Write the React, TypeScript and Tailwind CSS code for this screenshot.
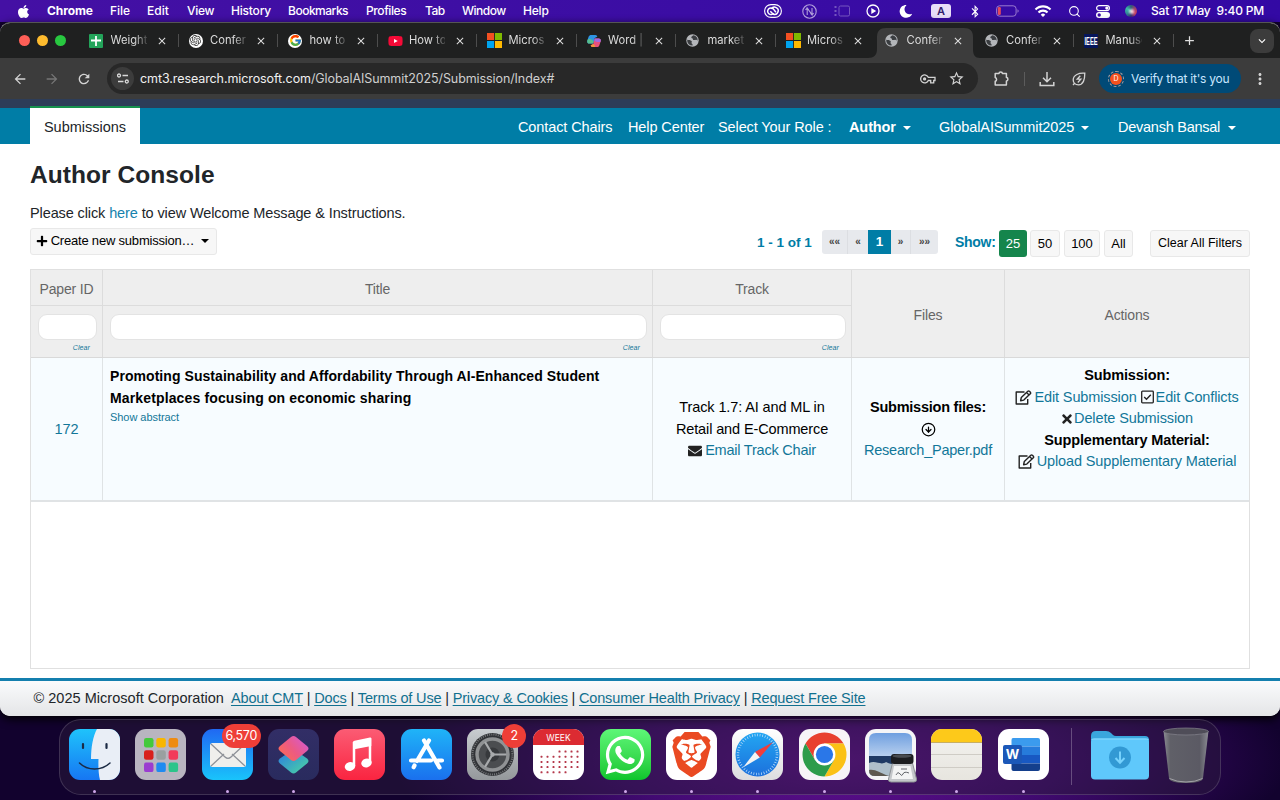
import React from "react";
import { FaApple, FaBluetoothB, FaMoon, FaYoutube, FaTimes, FaEnvelope, FaPlus, FaWhatsapp } from "react-icons/fa";
import { FcGoogle } from "react-icons/fc";
import { SiBrave, SiOpenai } from "react-icons/si";
import { MdWifi, MdStarOutline, MdArrowBack, MdArrowForward, MdRefresh, MdMoreVert, MdClose, MdAdd, MdExpandMore } from "react-icons/md";
import { LuSearch, LuCircleArrowDown } from "react-icons/lu";

const menus: [string, string][] = [
  ["Chrome", "w-[63px] font-bold tracking-[-0.100px]"],
  ["File", "w-[37px]"],
  ["Edit", "w-[40px]"],
  ["View", "w-[44px] tracking-[-0.300px]"],
  ["History", "w-[57px] tracking-[-0.200px]"],
  ["Bookmarks", "w-[78px] tracking-[-0.500px]"],
  ["Profiles", "w-[59px] tracking-[-0.400px]"],
  ["Tab", "w-[37px] tracking-[-0.500px]"],
  ["Window", "w-[61px] tracking-[-0.500px]"],
  ["Help", "w-[40px] tracking-[-0.200px]"],
];

function MenuBar() {
  return (
    <div className="flex h-[22px] items-center bg-gradient-to-r from-[#4410a4] to-[#3309a4] font-['Inter'] text-[12px] font-medium text-white">
      <FaApple className="ml-[17px] mr-[17px] h-[15px] w-[13px] shrink-0" />
      {menus.map(([m, c]) => (
        <span key={m} className={`shrink-0 whitespace-nowrap ${c}`}>{m}</span>
      ))}
      <div className="ml-auto mr-[16px] flex shrink-0 items-center">
        <svg className="h-[14px] w-[18px]" viewBox="0 0 18 14" fill="none" stroke="white">
          <rect x="0.600" y="0.600" width="16.800" height="12.800" rx="6.400" strokeWidth="1.100" />
          <path d="M9.600 9.200a3.300 3.300 0 1 1-.300-4.300l2.600 3.300" strokeWidth="1.500" />
          <path d="M6.300 7.200 9 10a3.600 3.600 0 1 0-1.600-5" strokeWidth="1.500" />
        </svg>
        <svg className="ml-[20px] h-[15px] w-[15px] opacity-60" viewBox="0 0 15 15" fill="none" stroke="white" strokeWidth="1.100">
          <circle cx="7.500" cy="7.500" r="6.700" />
          <path d="M5.200 11V4.200l4.800 6.500V4M3.500 5.800l1.700-1.800 1.500 1.800M8.400 9.200l1.600 1.800 1.600-1.800" />
        </svg>
        <svg className="ml-[17px] h-[12px] w-[16px] opacity-30" viewBox="0 0 16 12" fill="none" stroke="white">
          <rect x="5" y="1" width="10.500" height="10" rx="1.500" />
          <path d="M1.500 1v10" strokeWidth="2" strokeDasharray="2 2" />
        </svg>
        <svg className="ml-[16px] h-[14px] w-[14px]" viewBox="0 0 14 14" fill="none" stroke="white" strokeWidth="1.300">
          <circle cx="7" cy="7" r="6" />
          <path d="M5.300 4.100v5.800L10.200 7z" fill="white" stroke="none" />
        </svg>
        <FaMoon className="ml-[19px] h-[13px] w-[13px] -rotate-12" />
        <span className="ml-[19px] flex h-[14px] w-[20px] items-center justify-center rounded-[3px] bg-[#e8def8] text-[11px] font-semibold text-[#33206b]">A</span>
        <FaBluetoothB className="ml-[19px] h-[13px] w-[10px]" />
        <svg className="ml-[16px] h-[12px] w-[23px]" viewBox="0 0 23 12" fill="none">
          <rect x="0.600" y="0.800" width="19.500" height="10.400" rx="3" stroke="#9b7bd0" />
          <path d="M21.500 4.200v3.600a2 2 0 0 0 0-3.600z" fill="#9b7bd0" />
          <rect x="1.800" y="2" width="3" height="8" rx="1.200" fill="#e44a5c" />
        </svg>
        <MdWifi className="ml-[15px] h-[18px] w-[18px]" />
        <LuSearch className="ml-[16px] h-[13px] w-[13px]" />
        <svg className="ml-[15px] h-[13px] w-[14px]" viewBox="0 0 14 13">
          <rect x="0.600" y="0.600" width="12.800" height="5" rx="2.500" fill="none" stroke="white" strokeWidth="1.200" />
          <circle cx="10.800" cy="3.100" r="1.600" fill="white" />
          <rect x="0" y="7" width="14" height="6" rx="3" fill="white" />
          <circle cx="3.200" cy="10" r="1.700" fill="#3a0ba4" />
        </svg>
        <span className="ml-[15px] flex h-[12px] w-[12px] items-center justify-center rounded-full bg-[conic-gradient(#2b6078,#a03c6c,#c83c60,#303070,#2f8a98,#3bb8a8,#2b6078)]">
          <span className="h-[5px] w-[5px] rounded-full bg-white/80 blur-[1px]" />
        </span>
        <span className="ml-[14px] w-[113px] whitespace-pre tracking-[-0.180px]">Sat 17 May  9:40 PM</span>
      </div>
    </div>
  );
}

const MsLogo = () => (
  <svg className="h-[15px] w-[15px]" viewBox="0 0 14 14">
    <path d="M0 0h6.600v6.600H0z" fill="#f25022" />
    <path d="M7.400 0H14v6.600H7.400z" fill="#7fba00" />
    <path d="M0 7.400h6.600V14H0z" fill="#00a4ef" />
    <path d="M7.400 7.400H14V14H7.400z" fill="#ffb900" />
  </svg>
);
const Globe = () => (
  <svg className="h-[13px] w-[13px]" viewBox="0 0 13 13">
    <circle cx="6.500" cy="6.500" r="6.200" fill="#b4b6ba" />
    <path d="M7 1.300c-.3 1.200-1.700 1-1.700 2.200 0 1 1.600.6 1.600 1.700 0 1 1.600 1 2.600.7 1-.3 1.600.3 2.200.800A5.300 5.300 0 0 0 7 1.300z" fill="#3a3d40" />
    <path d="M1.200 5.800c1.300.3 3.600.2 4.400 1.200.7.900-.5 1.500 0 2.300.4.700 1.300.8 1 2.300A5.200 5.200 0 0 1 1.200 5.800z" fill="#3a3d40" />
  </svg>
);

const tabs: { icon: React.ReactNode; label: string; active?: boolean; noSep?: boolean }[] = [
  {
    icon: (
      <svg className="h-[14px] w-[14px]" viewBox="0 0 14 14">
        <rect width="14" height="14" rx="1" fill="#23a45a" />
        <path d="M7 2v10M2 6.500h10" stroke="white" strokeWidth="1.800" />
      </svg>
    ),
    label: "Weight",
  },
  {
    icon: (
      <span className="flex h-[14px] w-[14px] items-center justify-center rounded-full bg-white">
        <SiOpenai className="h-[11px] w-[11px] text-[#333]" />
      </span>
    ),
    label: "Confer",
  },
  {
    icon: (
      <span className="flex h-[14px] w-[14px] items-center justify-center rounded-full bg-white">
        <FcGoogle className="h-[13px] w-[13px]" />
      </span>
    ),
    label: "how to",
  },
  { icon: <FaYoutube className="h-[16px] w-[15px] bg-[linear-gradient(white,white)] bg-[length:6px_6px] bg-center bg-no-repeat text-[#f50a37]" />, label: "How to" },
  { icon: <MsLogo />, label: "Micros" },
  {
    icon: (
      <svg className="h-[14px] w-[14px]" viewBox="0 0 14 14">
        <path d="M4.200 1h4.200c1.200 0 1.600.8 1.900 1.800L7.700 4 6.300 9.600H2.200C.4 9.600-.1 8 .4 6.200L1.700 2.600C2.100 1.600 3 1 4.200 1z" fill="#2e94e4" />
        <path d="M.4 6.200C1.500 4 5 5 6.800 7.500l-.5 2.100H2.200C.4 9.600-.1 8 .4 6.200z" fill="#58bf8c" />
        <path d="M9.800 13H5.600c-1.200 0-1.600-.8-1.900-1.800L6.300 10l1.400-5.600h4.100c1.800 0 2.300 1.600 1.800 3.400l-1.300 3.600c-.4 1-1.300 1.600-2.500 1.600z" fill="#e8507c" />
        <path d="M7.700 4.400h4.100c1.800 0 2.300 1.600 1.800 3.400C12 8.500 8.500 8 7.200 6.400z" fill="#a06ae0" />
        <path d="M3.700 11.200 6.300 10l1.400 1 .5 2H5.600c-1.200 0-1.600-.8-1.900-1.800z" fill="#f0963c" />
      </svg>
    ),
    label: "Word |",
  },
  { icon: <Globe />, label: "market" },
  { icon: <MsLogo />, label: "Micros", noSep: true },
  { icon: <Globe />, label: "Confer", active: true, noSep: true },
  { icon: <Globe />, label: "Confer" },
  {
    icon: (
      <svg className="h-[14px] w-[14px]" viewBox="0 0 14 14">
        <rect width="14" height="14" fill="#06165c" />
        <text x="7" y="10.800" textAnchor="middle" textLength="13" lengthAdjust="spacingAndGlyphs" fontSize="10" fontWeight="700" fill="white" fontFamily="Liberation Sans, sans-serif">IEEE</text>
      </svg>
    ),
    label: "Manusc",
  },
];

function TabStrip() {
  return (
    <div className="flex h-[35px] items-center bg-[#1f2020]">
      <div className="flex w-[79px] shrink-0 gap-[7px] pl-[18.500px]">
        <span className="h-[11px] w-[11px] rounded-full bg-[#fe5f57]" />
        <span className="h-[11px] w-[11px] rounded-full bg-[#febb2e]" />
        <span className="h-[11px] w-[11px] rounded-full bg-[#28c840]" />
      </div>
      {tabs.map((t, i) => (
        <div key={i} className="relative flex h-full w-[99.500px] shrink-0 items-center pl-[10px]">
          {t.active && (
            <svg className="absolute bottom-0 left-[-7px] h-[30px] w-[112px]" viewBox="0 0 112 30">
              <path d="M0 30c6 0 9-3 9-9V9c0-6 3-9 9-9h78c6 0 9 3 9 9v12c0 6 2 9 7 9z" fill="#3c3c3c" />
            </svg>
          )}
          <span className="relative flex w-[21.500px] shrink-0">{t.icon}</span>
          <span className="relative w-[36px] shrink-0 whitespace-nowrap font-['Inter'] text-[11.200px] text-[#dcdcdc] [mask-image:linear-gradient(90deg,black_65%,#0003)]">{t.label}</span>
          <MdClose className="relative ml-[9px] h-[12px] w-[12px] shrink-0 text-[#e0e0e0]" />
          {!t.noSep && <span className="ml-auto h-[13px] w-px bg-[#4d4d4d]" />}
        </div>
      ))}
      <MdAdd className="ml-[8px] h-[15px] w-[15px] text-[#e0e0e0]" />
      <span className="ml-auto mr-[6px] flex h-[24px] w-[24px] items-center justify-center rounded-[8px] bg-[#3c3c3c]">
        <MdExpandMore className="h-[14px] w-[14px] text-white" />
      </span>
    </div>
  );
}

function Toolbar() {
  return (
    <div className="flex h-[41px] items-center bg-[#3c3c3c] text-[#d3d3d3]">
      <MdArrowBack className="ml-[12px] h-[16px] w-[16px]" />
      <MdArrowForward className="ml-[16px] h-[16px] w-[16px] text-[#767676]" />
      <MdRefresh className="ml-[16px] h-[16px] w-[16px]" />
      <div className="ml-[15px] flex h-[31px] w-[871px] items-center rounded-full bg-[#282828] pl-[4px]">
        <span className="flex h-[23px] w-[23px] items-center justify-center rounded-full bg-[#3c3c3c]">
          <svg className="h-[11px] w-[12px]" viewBox="0 0 12 11" fill="none" stroke="#d8d8d8" strokeWidth="1.300">
            <circle cx="2" cy="2.500" r="1.500" />
            <path d="M5.500 2.500H11M1 8.500h5.500" />
            <circle cx="9.800" cy="8.500" r="1.500" />
          </svg>
        </span>
        <span className="ml-[6px] whitespace-nowrap pt-px font-['Inter'] text-[12.500px] tracking-[-0.090px] text-[#cfcfcf]">
          <span className="text-[#f0f0f0]">cmt3.research.microsoft.com</span>/GlobalAISummit2025/Submission/Index#
        </span>
        <svg className="ml-auto h-[10px] w-[16px]" viewBox="0 0 16 10" fill="none" stroke="currentColor" strokeWidth="1.300">
          <path d="M8.300 3.300H15v3.200h-1.300v2.300h-3V6.500H8.300A4 4 0 1 1 8.300 3.300z" />
          <circle cx="4.600" cy="4.900" r="1" fill="currentColor" />
        </svg>
        <MdStarOutline className="ml-[12px] mr-[13px] h-[17px] w-[17px]" />
      </div>
      <svg className="ml-[16px] h-[16px] w-[15px]" viewBox="0 0 15 16" fill="none" stroke="currentColor" strokeWidth="1.500" strokeLinejoin="round">
        <path d="M1.200 2.600H5a1.700 1.500 0 0 1 3.400 0h4v4a1.500 1.700 0 0 1 0 3.400v4H1.200v-3.700a2 2 0 0 0 0-3.800z" />
      </svg>
      <span className="ml-[15px] h-[14px] w-px bg-[#5c5c5c]" />
      <svg className="ml-[14px] h-[16px] w-[16px]" viewBox="0 0 16 16" fill="none" stroke="currentColor" strokeWidth="1.500">
        <path d="M8 1v9.500M4 6.700l4 4 4-4M1.200 11v3.500h13.600V11" />
      </svg>
      <svg className="ml-[17px] h-[14px] w-[14px]" viewBox="0 0 14 14" fill="none" stroke="currentColor" strokeWidth="1.300">
        <path d="M12.800 1.200C7 .6 1.200 3 1.200 8c0 3 2.300 4.800 5.200 4.800 5 0 6.400-4.800 6.400-11.600zM2.600 11.300 1 13" />
        <path d="M8.300 3.800 5.200 7.200h3.600L5.800 10.500" />
      </svg>
      <span className="ml-[13px] flex h-[29px] w-[142px] items-center rounded-full bg-[#004a77] pl-[9px]">
        <span className="flex h-[16px] w-[16px] shrink-0 items-center justify-center rounded-full border border-dashed border-[#b0a0a0]">
          <span className="flex h-[12px] w-[12px] shrink-0 items-center justify-center rounded-full bg-[#f4511e] font-['Inter'] text-[7px] leading-none text-white">D</span>
        </span>
        <span className="ml-[7px] whitespace-nowrap font-['Inter'] text-[12px] tracking-[-0.220px] text-[#c8e6ff]">Verify that it's you</span>
      </span>
      <MdMoreVert className="ml-[10px] h-[18px] w-[18px]" />
    </div>
  );
}

const Caret = ({ dark = false }: { dark?: boolean }) => (
  <svg className="h-[4px] w-[8px] shrink-0" viewBox="0 0 8 4">
    <path d="M0 0h8L4 4z" fill={dark ? "#000" : "#fff"} />
  </svg>
);

function SiteNav() {
  return (
    <>
      <div className="h-[9px] bg-[#2d3d58]" />
      <div className="flex h-[36px] items-center bg-[#007da6] text-[14.500px] text-white">
        <div className="-mt-[2px] ml-[30px] flex h-[38px] w-[110px] shrink-0 items-center justify-center border-t-2 border-[#16924d] bg-white pt-[4px] text-[#212529]">Submissions</div>
        <div className="flex flex-1 items-center whitespace-nowrap pl-[378px] pt-[3px] tracking-[-0.100px]">
          <span className="w-[110px]">Contact Chairs</span>
          <span className="w-[90px]">Help Center</span>
          <span className="w-[131px]">Select Your Role :</span>
          <span className="w-[54px] font-bold">Author</span>
          <Caret />
          <span className="ml-[28px] w-[142px]">GlobalAISummit2025</span>
          <Caret />
          <span className="ml-[29px] w-[110px] tracking-[-0.250px]">Devansh Bansal</span>
          <Caret />
        </div>
      </div>
    </>
  );
}

const link = "text-[#127799]";
const btn = "flex h-[27px] items-center justify-center whitespace-nowrap rounded-[3px] border border-[#e8e8e8] bg-[#f7f7f7] text-black";

function Controls() {
  return (
    <div className="mt-[5px] flex h-[31px] items-start text-[13px]">
      <button className={`${btn} w-[187px] gap-[3px] pb-px pr-[2px]`}>
        <FaPlus className="h-[12px] w-[12px]" />
        <span className="mr-[4px] tracking-[-0.200px]">Create new submission…</span>
        <Caret dark />
      </button>
      <span className="ml-[540px] mt-[5px] w-[65px] whitespace-nowrap text-[13.500px] font-bold leading-[19px] text-[#007da6]">1 - 1 of 1</span>
      <div className="mt-[2px] flex h-[24px] overflow-hidden rounded-[3px] bg-[#e7e9ed] text-[10px] font-bold leading-[24px] text-[#444]">
        <span className="w-[26px] border-r border-[#dcdee2] text-center">««</span>
        <span className="w-[20px] text-center">«</span>
        <span className="w-[23px] bg-[#007da6] text-center text-[13.500px] text-white">1</span>
        <span className="w-[20px] border-r border-[#dcdee2] text-center">»</span>
        <span className="w-[27px] text-center">»»</span>
      </div>
      <span className="ml-[17px] mt-[5px] w-[44px] whitespace-nowrap text-[14px] font-bold leading-[19px] tracking-[-0.300px] text-[#007da6]">Show:</span>
      <div className="mt-[2px] flex gap-[3px]">
        <span className="flex h-[27px] w-[28px] items-center justify-center rounded-[3px] bg-[#15854c] text-white">25</span>
        <span className={`${btn} w-[30px]`}>50</span>
        <span className={`${btn} ml-[1px] w-[36px]`}>100</span>
        <span className={`${btn} ml-[1px] w-[29px]`}>All</span>
        <span className={`${btn} ml-[14px] w-[100px] text-[12.500px]`}>Clear All Filters</span>
      </div>
    </div>
  );
}

function FilterHead({ label }: { label: string }) {
  return (
    <div className="border-r border-[#dcdcdc]">
      <div className="flex h-[36px] items-center justify-center border-b border-[#dcdcdc] pt-[3px]">{label}</div>
      <div className="pl-[7px] pr-[5px] pt-[8px]">
        <div className="h-[26px] rounded-[9px] border border-[#e3e3e3] bg-white" />
        <div className="mt-[3px] pr-[7px] text-right text-[7px] italic leading-[9px] tracking-[0.100px] text-[#127799]">Clear</div>
      </div>
    </div>
  );
}

const EditIcon = () => (
  <svg className="h-[15px] w-[17px]" viewBox="0 0 17 15" fill="none" stroke="#222" strokeWidth="1.400" strokeLinejoin="round">
    <path d="M9.500 2H1.200v12h11.500V9" />
    <path d="m5.600 10.700.7-3.200 6.500-6.300q.8-.6 1.600.1l1 1q.6.800-.1 1.500L8.800 10.100zM11.500 2.500l2.600 2.500" />
  </svg>
);
const CheckIcon = () => (
  <svg className="h-[14px] w-[13px]" viewBox="0 0 13 14" fill="none" stroke="#222">
    <rect x=".7" y="1.200" width="11.600" height="11.600" rx=".8" strokeWidth="1.300" />
    <path d="m3.200 7 2.300 2.300 4.300-4.600" strokeWidth="1.400" />
  </svg>
);

const cols = "grid grid-cols-[72px_550px_199px_153px_244px]";

function SubmissionTable() {
  return (
    <div className="mt-[10px] h-[400px] border border-[#e0e0e0] text-[14.500px]">
      <div className={`${cols} h-[88px] border-b border-[#d9d9d9] bg-[#eeeeee] text-[14px] tracking-[-0.150px] text-[#666]`}>
        <FilterHead label="Paper ID" />
        <FilterHead label="Title" />
        <FilterHead label="Track" />
        <div className="flex items-center justify-center border-r border-[#dcdcdc] pt-[3px]">Files</div>
        <div className="flex items-center justify-center pt-[3px]">Actions</div>
      </div>
      <div className={`${cols} h-[144px] border-b-2 border-[#e0e3e5] bg-[#f7fcff] leading-[21.500px] tracking-[-0.120px] text-black`}>
        <div className={`flex items-center justify-center border-r border-[#dfe3e5] pt-[2px] ${link}`}>172</div>
        <div className="border-r border-[#dfe3e5] pl-[7px] pt-[8px] text-[14px]">
          <div className="whitespace-nowrap font-bold tracking-[0.060px]">Promoting Sustainability and Affordability Through AI-Enhanced Student<br /><span className="tracking-[0.140px]">Marketplaces focusing on economic sharing</span></div>
          <div className={`text-[11px] leading-[16px] tracking-[-0.050px] ${link}`}>Show abstract</div>
        </div>
        <div className="flex flex-col items-center justify-center whitespace-nowrap border-r border-[#dfe3e5] pt-[1px]">
          <span>Track 1.7: AI and ML in</span>
          <span>Retail and E-Commerce</span>
          <span className={`flex items-center gap-[3px] tracking-[-0.220px] ${link}`}><FaEnvelope className="h-[14px] w-[14px] text-[#222]" />Email Track Chair</span>
        </div>
        <div className="flex flex-col items-center justify-center whitespace-nowrap border-r border-[#dfe3e5] pt-[1px] tracking-[-0.240px]">
          <span className="font-bold">Submission files:</span>
          <span className="flex h-[21.500px] items-center"><LuCircleArrowDown className="h-[15px] w-[15px] text-black" /></span>
          <span className={link}>Research_Paper.pdf</span>
        </div>
        <div className="flex flex-col items-center whitespace-nowrap pt-[7px]">
          <span className="font-bold">Submission:</span>
          <span className={`flex items-center gap-[2px] ${link}`}>
            <EditIcon />Edit Submission
            <span className="ml-[2px]"><CheckIcon /></span>Edit Conflicts
          </span>
          <span className={`flex items-center gap-[1px] ${link}`}><FaTimes className="h-[14px] w-[12px] text-[#222]" />Delete Submission</span>
          <span className="font-bold">Supplementary Material:</span>
          <span className={`flex items-center gap-[2px] ${link}`}><EditIcon />Upload Supplementary Material</span>
        </div>
      </div>
    </div>
  );
}

const footerLinks = ["About CMT", "Docs", "Terms of Use", "Privacy & Cookies", "Consumer Health Privacy", "Request Free Site"];

function Footer() {
  return (
    <div className="mt-auto flex h-[38px] items-center whitespace-nowrap border-t-[3px] border-[#147fae] bg-[linear-gradient(to_bottom,#fafbfc,#e4e5e7)] pl-[33.500px] text-[14.500px] tracking-[-0.150px] text-[#212529]">
      <span className="mr-[7px] tracking-[0.030px]">© 2025 Microsoft Corporation</span>
      {footerLinks.map((l, i) => (
        <React.Fragment key={l}>
          {i > 0 && <span className="mx-[3.800px]">|</span>}
          <a className="text-[#11708f] underline underline-offset-2">{l}</a>
        </React.Fragment>
      ))}
    </div>
  );
}

const S = ({ children }: { children: React.ReactNode }) => (
  <svg className="h-[51px] w-[51px]" viewBox="0 0 51 51">{children}</svg>
);
const Tile = ({ fill }: { fill: string }) => <rect width="51" height="51" rx="11" fill={fill} />;
const Grad = ({ id, a, b }: { id: string; a: string; b: string }) => (
  <linearGradient id={id} x1="0" y1="0" x2="0" y2="1">
    <stop stopColor={a} />
    <stop offset="1" stopColor={b} />
  </linearGradient>
);

const Finder = () => (
  <S>
    <Grad id="fin" a="#1fc3fb" b="#1676f3" />
    <Tile fill="url(#fin)" />
    <path d="M28 0h12a11 11 0 0 1 11 11v29a11 11 0 0 1-11 11h-9c-1.500-6-1.800-13-1.500-21H22C22 18 24 7 28 0z" fill="#e9eef6" />
    <path d="M14 15v4M37.500 15v4" stroke="#1b2a44" strokeWidth="2.200" strokeLinecap="round" />
    <path d="M10.500 34c8 8 22 8 30.500 0" fill="none" stroke="#1b2a44" strokeWidth="1.500" strokeLinecap="round" />
  </S>
);
const padColors = ["#44c93c", "#f8b600", "#ee8b12", "#d8201c", "#9aa0a0", "#f23a5a", "#9a3cd0", "#1f8af0", "#2cc48a"];
const Launchpad = () => (
  <S>
    <Tile fill="#b9b5c0" />
    {padColors.map((c, i) => (
      <rect key={c} x={9 + (i % 3) * 12.3} y={9 + Math.floor(i / 3) * 12.3} width="9.500" height="9.500" rx="2.200" fill={c} />
    ))}
  </S>
);
const Mail = () => (
  <S>
    <Grad id="mail" a="#2068f2" b="#19c4fb" />
    <Tile fill="url(#mail)" />
    <rect x="8" y="14" width="36" height="24" rx="2.500" fill="#f0efec" />
    <path d="m9 37 13-12M43 37 30 25M9 15l14 13c2 1.800 4 1.800 6 0l14-13" fill="none" stroke="#8f9298" strokeWidth="1.300" />
  </S>
);
const Shortcuts = () => (
  <S>
    <Grad id="sbg" a="#322e66" b="#292b5e" />
    <linearGradient id="s1" x1="0" y1="0.900" x2="1" y2="0.200"><stop stopColor="#ff6d4c" /><stop offset=".5" stopColor="#ec5a84" /><stop offset="1" stopColor="#d65ad0" /></linearGradient>
    <linearGradient id="s2" x1="0" y1="0" x2="1" y2="1"><stop stopColor="#2a78e4" /><stop offset="1" stopColor="#4cd8a0" /></linearGradient>
    <Tile fill="url(#sbg)" />
    <path d="m25.500 20 13.500 9.500q3 2.500 0 5L28 43.500q-2.500 2-5 0L12 34.500q-3-2.500 0-5z" fill="url(#s2)" />
    <path d="M23 8q2.500-2 5 0l11 9q3 2.500 0 5L28 31q-2.500 2-5 0L12 22q-3-2.500 0-5z" fill="url(#s1)" />
  </S>
);
const Music = () => (
  <S>
    <Grad id="mus" a="#fb5c74" b="#fa2440" />
    <Tile fill="url(#mus)" />
    <path d="M20 37V14l16-3.500v23" fill="none" stroke="white" strokeWidth="2.500" />
    <path d="M19 13.500q0-1.500 1.500-1.800L36 8.500q1.300-.2 1.300 1.200V17L19 20.500z" fill="white" />
    <ellipse cx="16" cy="37.500" rx="5.300" ry="4.300" fill="white" transform="rotate(-15 16 37.500)" />
    <ellipse cx="32.500" cy="34" rx="5.300" ry="4.300" fill="white" transform="rotate(-15 32.500 34)" />
  </S>
);
const AppStore = () => (
  <S>
    <Grad id="app" a="#1fb4f8" b="#1a70ee" />
    <Tile fill="url(#app)" />
    <g stroke="white" strokeWidth="4.200" strokeLinecap="round">
      <path d="M28 11.500 16 32M23 11.500l15.500 27M10 31.500h20M37 31.500h4M13.500 36.500l-.8 1.700" />
    </g>
  </S>
);
const Settings = () => (
  <S>
    <Grad id="set" a="#c8ccd0" b="#94989b" />
    <Tile fill="url(#set)" />
    <circle cx="25.500" cy="25.500" r="21.500" fill="#303236" />
    <circle cx="25.500" cy="25.500" r="20" fill="none" stroke="#77797c" strokeWidth="2" strokeDasharray="1 1.200" />
    <circle cx="25.500" cy="25.500" r="15.500" fill="#4b4d50" stroke="#909294" strokeWidth="3.500" />
    <circle cx="25.500" cy="25.500" r="7" fill="#37393c" />
    <path d="M25.500 25.500h14M25.500 25.500 18 13M25.500 25.500 18 38" stroke="#a8aaac" strokeWidth="2.200" />
    <circle cx="25.500" cy="25.500" r="2.200" fill="#a8aaac" />
  </S>
);
const dotRows: [number, number][] = [[3, 7], [0, 7], [0, 7], [0, 7], [0, 5]];
const Calendar = () => (
  <S>
    <Tile fill="#fff" />
    <path d="M0 16v-5A11 11 0 0 1 11 0h29a11 11 0 0 1 11 11v5z" fill="#dc2b32" />
    <text x="25.500" y="11.500" textAnchor="middle" fontSize="8.500" fill="white" fontFamily="Inter, sans-serif">WEEK</text>
    {dotRows.map(([s, e], r) =>
      Array.from({ length: e - s }, (_, k) => (
        <rect key={`${r}-${k}`} x={7.5 + (s + k) * 6} y={21.5 + r * 5.2} width="2" height="2" rx="0.600" fill="#b5384a" />
      ))
    )}
  </S>
);
const WhatsApp = () => (
  <div className="flex h-[51px] w-[51px] items-center justify-center rounded-[11px] bg-gradient-to-b from-[#5df777] to-[#0bc52c]">
    <FaWhatsapp className="h-[44px] w-[44px] text-white" />
  </div>
);
const Brave = () => (
  <div className="flex h-[51px] w-[51px] items-center justify-center rounded-[11px] bg-white">
    <SiBrave className="h-[45px] w-[45px] text-[#ea4a22]" />
  </div>
);
const Safari = () => (
  <S>
    <Grad id="sf0" a="#fff" b="#dcdcde" />
    <Grad id="sf1" a="#23a6f2" b="#1c70dc" />
    <Tile fill="url(#sf0)" />
    <circle cx="25.500" cy="25.500" r="22" fill="url(#sf1)" />
    <circle cx="25.500" cy="25.500" r="19.500" fill="none" stroke="#c4e2fa" strokeWidth="2.500" strokeDasharray=".7 1.900" />
    <path d="m41 13-13.200 15.500-4.800-5.400z" fill="#f03e3c" />
    <path d="m11 38.500 12-15.400 4.800 5.400z" fill="#f3f3f3" />
  </S>
);
const Chrome = () => (
  <S>
    <Tile fill="#f7f4f7" />
    <path d="M6.450 14.500A22 22 0 0 1 44.550 14.500H25.500L16 31z" fill="#e8402f" />
    <path d="M25.500 14.500H44.550A22 22 0 0 1 25.500 47.500L35 31z" fill="#fbc116" />
    <path d="M25.500 47.500A22 22 0 0 1 6.450 14.500L16 31H35z" fill="#2d9c4b" />
    <circle cx="25.500" cy="25.500" r="10.900" fill="white" />
    <circle cx="25.500" cy="25.500" r="8.600" fill="#2a77e8" />
  </S>
);
const Preview = () => (
  <svg className="h-[54px] w-[53px]" viewBox="0 0 53 54">
    <Grad id="sky" a="#6f9fe0" b="#b7cfee" />
    <rect width="51" height="51" rx="11" fill="#f5f5f7" />
    <path d="M4 27V11q0-7 7-7h29q7 0 7 7v16z" fill="url(#sky)" />
    <path d="M4 27h43v15q0 5-5 5H10q-6 0-6-6z" fill="#1f3a64" />
    <path d="M4 34c7-3 12 3 17-1 6 3 12 4 26 1v8q0 5-5 5H10q-6 0-6-6z" fill="#aebfca" />
    <path d="M4 41c7-1 10 3 20 6H10q-6 0-6-6z" fill="#5e5950" />
    <path d="M28 32h19l4.500 18q.500 3-2.500 3H26q-3 0-2.500-3z" fill="#c4c7ca" stroke="#8c9094" />
    <rect x="26" y="25" width="22.500" height="10" rx="3" fill="#1c1d20" />
    <ellipse cx="37" cy="27" rx="9.500" ry="1.800" fill="#494c50" />
    <path d="M29 37h16.500l2.500 13H26.500z" fill="#f3f4f4" />
    <path d="M31 46q2-4 4-1t3 0 6-1M36 40h6" stroke="#62656a" fill="none" />
  </svg>
);
const Notes = () => (
  <S>
    <Grad id="nt" a="#f4f3ef" b="#e7e5df" />
    <Tile fill="url(#nt)" />
    <path d="M0 13v-2A11 11 0 0 1 11 0h29a11 11 0 0 1 11 11v2z" fill="#fdc91a" />
    <path d="M0 13.500h51" stroke="#c7ae62" />
    <path d="M0 25.500h51M0 38.500h51" stroke="#cfccc5" />
  </S>
);
const Word = () => (
  <S>
    <Tile fill="#fff" />
    <path d="M15 9h25q2 0 2 2v6.500H13.500V11q0-2 1.500-2z" fill="#3b9bee" />
    <path d="M13.500 17.500H42V26H13.500z" fill="#267bdb" />
    <path d="M13.500 26H42v8.500H13.500z" fill="#1858c2" />
    <path d="M13.500 34.500H42V40q0 2-2 2H15.500q-2 0-2-2z" fill="#143f8c" />
    <rect x="5" y="16" width="19" height="19" rx="2" fill="#1b58b8" />
    <text x="14.500" y="30" textAnchor="middle" fontSize="13" fontWeight="700" fill="white" fontFamily="Inter, sans-serif">W</text>
  </S>
);

const dock: { C: React.FC; dot?: boolean; badge?: string }[] = [
  { C: Finder, dot: true },
  { C: Launchpad },
  { C: Mail, dot: true, badge: "6,570" },
  { C: Shortcuts, dot: true },
  { C: Music },
  { C: AppStore },
  { C: Settings, badge: "2" },
  { C: Calendar },
  { C: WhatsApp, dot: true },
  { C: Brave, dot: true },
  { C: Safari, dot: true },
  { C: Chrome, dot: true },
  { C: Preview, dot: true },
  { C: Notes, dot: true },
  { C: Word, dot: true },
];

function Dock() {
  return (
    <div className="mx-auto mt-[3px] flex h-[76px] w-[1162px] rounded-[22px] border border-white/15 bg-[#2a1a3c]/50 pl-[9px] pt-[9px]">
      {dock.map(({ C, dot, badge }, i) => (
        <div key={i} className="relative w-[66.350px] shrink-0">
          <div className="h-[61px]"><C /></div>
          {dot && <div className="ml-[24px] h-[3px] w-[3px] rounded-full bg-[#cfa8ea]" />}
          {badge && (
            <span className={`absolute top-[-5px] flex h-[24px] items-center justify-center rounded-full bg-[#ee3e37] font-['Inter'] text-[12.500px] tracking-[-0.300px] text-white ${badge.length > 1 ? "left-[20px] w-[39px]" : "left-[35px] w-[24px]"}`}>{badge}</span>
          )}
        </div>
      ))}
      <span className="ml-[7px] mt-[-1px] h-[57px] w-px shrink-0 bg-white/25" />
      <svg className="ml-[18px] mt-[1px] h-[50px] w-[60px] shrink-0" viewBox="0 0 60 50">
        <path d="M1 6q0-5 5-5h10q3 0 5 2l2 2q1 1 3 1h29q4 0 4 4v10H1z" fill="#3aa6dd" />
        <rect x="1" y="8.500" width="58" height="41" rx="4" fill="#5fc8fb" />
        <path d="M1.500 10q0-1 2-1h53q2 0 2 1" stroke="#8cdcff" fill="none" />
        <circle cx="30" cy="27.500" r="11" fill="#3299d4" />
        <path d="M30 21.500v11M25.500 28l4.500 4.800 4.500-4.800" stroke="#76d2fd" strokeWidth="2" fill="none" />
      </svg>
      <svg className="ml-[13px] mt-[-2px] h-[57px] w-[46px] shrink-0" viewBox="0 0 46 57">
        <linearGradient id="tr"><stop stopColor="#8b8b93" /><stop offset=".15" stopColor="#606068" /><stop offset=".8" stopColor="#5b5a64" /><stop offset="1" stopColor="#8b8b93" /></linearGradient>
        <path d="M.500 4h45L40 51q-.600 5-17 5T6 51z" fill="url(#tr)" />
        <ellipse cx="23" cy="4.500" rx="22.300" ry="3.500" fill="#4f4d58" stroke="#85848e" strokeWidth=".7" />
        <path d="M6.500 51.500q7 3.500 16.500 3.500t16.500-3.500" stroke="#a3a3a8" fill="none" />
      </svg>
    </div>
  );
}

export default function App() {
  return (
    <div className="flex h-[800px] w-[1280px] flex-col overflow-hidden bg-[#12022e] bg-[radial-gradient(ellipse_450px_130px_at_840px_760px,#6a109a,#420a72_50%,transparent)] font-['Liberation_Sans',sans-serif]">
      <MenuBar />
      <div className="flex h-[694px] shrink-0 flex-col overflow-hidden rounded-[10px] border-t border-[#555] bg-white shadow-[0_3px_10px_#000]">
        <TabStrip />
        <Toolbar />
        <SiteNav />
        <main className="px-[30px] pt-[15px] text-[14.500px] text-[#212529]">
          <h1 className="text-[24.500px] font-bold leading-[32px] tracking-[0.060px]">Author Console</h1>
          <p className="mt-[12px] leading-[20px] tracking-[-0.110px]">Please click <a className="text-[#1682ad]">here</a> to view Welcome Message &amp; Instructions.</p>
          <Controls />
          <SubmissionTable />
        </main>
        <Footer />
      </div>
      <Dock />
    </div>
  );
}
